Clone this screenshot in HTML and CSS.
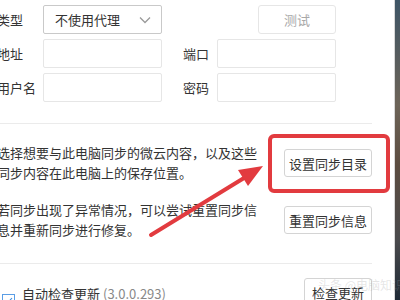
FILE: index.html
```html
<!DOCTYPE html>
<html lang="zh-CN">
<head>
    <meta charset="UTF-8">
    <meta name="viewport" content="width=device-width, initial-scale=1.0">
    <link rel="stylesheet" href="styles.css">
</head>
<body>

    <div class="page">
        <div class="panel">

            <!-- 代理设置 -->
            <div class="proxy-form">
                <span class="label">类型</span>
                <div class="select">
                    <span>不使用代理</span>
                    <svg class="chevron" width="12" height="8" viewBox="0 0 12 8">
                        <path d="M1 1.5 L6 6.5 L11 1.5" fill="none" stroke="#9a9a9a" stroke-width="1.3"/>
                    </svg>
                </div>
                <span></span>
                <span></span>
                <button class="btn btn-test" disabled>测试</button>

                <span class="label">地址</span>
                <div class="input"></div>
                <span></span>
                <span class="label">端口</span>
                <div class="input"></div>

                <span class="label">用户名</span>
                <div class="input"></div>
                <span></span>
                <span class="label">密码</span>
                <div class="input"></div>
            </div>

            <div class="divider divider-top"></div>

            <!-- 同步设置 -->
            <div class="sync">
                <div class="sync-row">
                    <p class="sync-text">选择想要与此电脑同步的微云内容，以及这些<br>同步内容在此电脑上的保存位置。</p>
                    <div class="highlight-wrap">
                        <button class="btn btn-wide">设置同步目录</button>
                        <div class="highlight-box"></div>
                    </div>
                </div>
                <div class="sync-row">
                    <p class="sync-text">若同步出现了异常情况，可以尝试重置同步信<br>息并重新同步进行修复。</p>
                    <button class="btn btn-wide">重置同步信息</button>
                </div>
            </div>

            <div class="divider divider-bottom"></div>

            <!-- 更新 -->
            <div class="update-row">
                <label class="auto-update">
                    <span class="checkbox">
                        <svg width="9" height="7" viewBox="0 0 9 7">
                            <path d="M1 3.5 L3.5 6 L8 1" fill="none" stroke="#3b8de0" stroke-width="1.1"/>
                        </svg>
                    </span>
                    自动检查更新 <span class="version">(3.0.0.293)</span>
                </label>
                <button class="btn btn-update">检查更新</button>
            </div>
        </div>

        <div class="side-photo"></div>

        <!-- 标注箭头 -->
        <svg class="arrow" width="400" height="300" viewBox="0 0 400 300">
            <line x1="151" y1="235" x2="244" y2="178" stroke="#e23b3f" stroke-width="4" stroke-linecap="round"/>
            <polygon points="263,166 248,186 238,170" fill="#e23b3f"/>
        </svg>

        <span class="watermark">头条 @电脑知识</span>
    </div>

</body>
</html>
```

FILE: styles.css
```css
body {
    margin: 0;
    padding: 0;
    width: 400px;
    height: 300px;
    overflow: hidden;
    background-color: #ffffff;
    font-family: "Noto Sans CJK SC", "Liberation Sans", sans-serif;
    font-size: 13px;
    color: #333;
}

.page {
    position: relative;
    display: flex;
    width: 400px;
    height: 300px;
    overflow: hidden;
}

.panel {
    width: 375px;
    margin-left: -3px;
    padding-top: 5px;
    flex-shrink: 0;
}

.proxy-form {
    display: grid;
    grid-template-columns: 46px 119px 21px 34px 119px;
    grid-auto-rows: 29px;
    row-gap: 5px;
    align-items: center;
}

.label {
    line-height: 20px;
    white-space: nowrap;
}

.select, .input {
    height: 29px;
    box-sizing: border-box;
    border: 1px solid #e6e6e6;
    border-radius: 2px;
    background-color: #fff;
}

.select {
    display: flex;
    justify-content: space-between;
    align-items: center;
    padding: 0 10px 0 11px;
    border-color: #c9c9c9;
}

.chevron {
    margin-top: 1px;
}

.btn {
    height: 28px;
    box-sizing: border-box;
    padding: 0;
    border: 1px solid #d4d4d4;
    border-radius: 3px;
    background-color: #fff;
    font-family: inherit;
    font-size: 13px;
    color: #333;
}

.btn-test {
    justify-self: end;
    width: 78px;
    height: 29px;
    border-color: #e6e6e6;
    color: #a8a8a8;
}

.divider {
    height: 1px;
    background-color: #ebebeb;
}

.divider-top {
    margin-top: 21px;
}

.divider-bottom {
    margin-top: 23px;
}

.sync {
    display: flex;
    flex-direction: column;
    gap: 17px;
    margin-top: 19px;
}

.sync-row {
    display: flex;
    justify-content: space-between;
    align-items: center;
}

.sync-text {
    margin: 0;
    line-height: 20px;
    white-space: nowrap;
}

.btn-wide {
    width: 88px;
}

.highlight-wrap {
    position: relative;
}

.highlight-box {
    position: absolute;
    left: -16px;
    top: -15px;
    width: 122px;
    height: 59px;
    box-sizing: border-box;
    border: 4px solid #e23b3f;
    border-radius: 6px;
}

.update-row {
    display: flex;
    justify-content: space-between;
    align-items: flex-start;
    margin-top: 14px;
}

.auto-update {
    display: flex;
    align-items: flex-start;
    margin-top: 6px;
    margin-left: 5px;
    line-height: 20px;
    white-space: nowrap;
}

.checkbox {
    display: flex;
    justify-content: center;
    align-items: center;
    width: 13px;
    height: 13px;
    box-sizing: border-box;
    margin: 10px 7px 0 0;
    border: 1px solid #5a9ee6;
}

.version {
    margin-left: 3px;
    color: #888;
}

.btn-update {
    width: 68px;
}

.side-photo {
    flex: 1;
    margin-left: 22px;
    border-left: 1px solid #d8d8d8;
    background: linear-gradient(180deg, #3e5566 0%, #6d6458 35%, #5c4c40 55%, #4a4a4c 80%, #1f2a36 100%);
}

.arrow {
    position: absolute;
    left: 0;
    top: 0;
    pointer-events: none;
}

.watermark {
    position: absolute;
    left: 318px;
    top: 276px;
    font-size: 12px;
    color: rgba(150, 150, 150, 0.25);
    white-space: nowrap;
}
```
